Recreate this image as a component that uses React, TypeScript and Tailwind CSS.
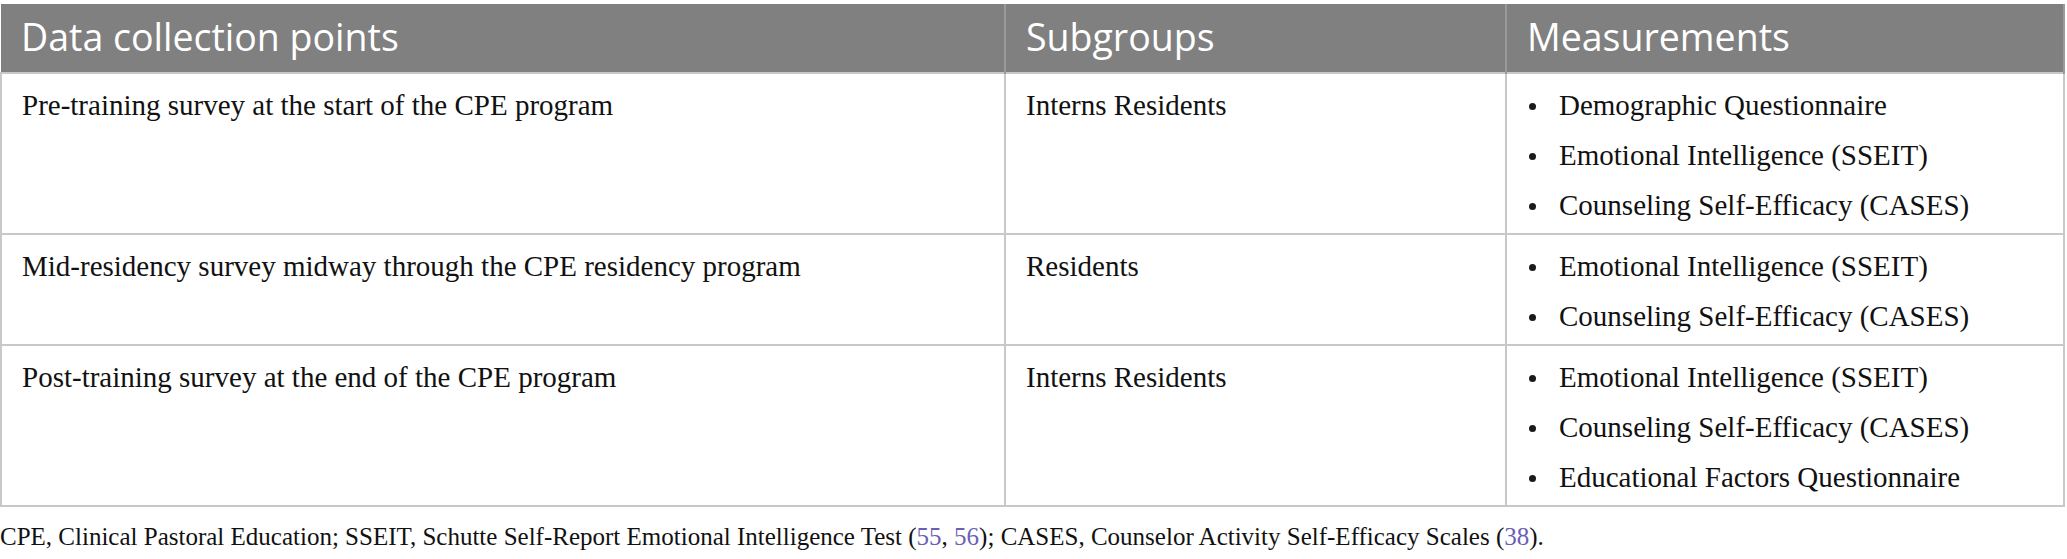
const rows = [
  {
    point: "Pre-training survey at the start of the CPE program",
    group: "Interns Residents",
    items: [
      "Demographic Questionnaire",
      "Emotional Intelligence (SSEIT)",
      "Counseling Self-Efficacy (CASES)",
    ],
  },
  {
    point: "Mid-residency survey midway through the CPE residency program",
    group: "Residents",
    items: ["Emotional Intelligence (SSEIT)", "Counseling Self-Efficacy (CASES)"],
  },
  {
    point: "Post-training survey at the end of the CPE program",
    group: "Interns Residents",
    items: [
      "Emotional Intelligence (SSEIT)",
      "Counseling Self-Efficacy (CASES)",
      "Educational Factors Questionnaire",
    ],
  },
];

export default function App() {
  return (
    <div className="bg-white w-[2067px] h-[559px] pt-[4px] font-['Liberation_Serif',serif] text-[#111]">
      <table className="w-[2065px] border-collapse table-fixed">
        <colgroup>
          <col className="w-[1004px]" />
          <col className="w-[501px]" />
          <col />
        </colgroup>
        <thead>
          <tr className="bg-[#808080] text-white font-['Open_Sans',sans-serif] text-[37.5px]">
            {["Data collection points", "Subgroups", "Measurements"].map((h) => (
              <th
                key={h}
                className="h-[69px] text-left font-normal px-[20px] pb-[2px] border-x-2 border-[#9a9a9a] first:border-l-0"
              >
                {h}
              </th>
            ))}
          </tr>
        </thead>
        <tbody className="text-[29px] leading-[50px]">
          {rows.map((r) => (
            <tr key={r.point} className="border-2 border-[#c8c8c8] align-top">
              <td className="border-2 border-[#c8c8c8] px-[20px] pt-[6px] pb-[3px]">{r.point}</td>
              <td className="border-2 border-[#c8c8c8] px-[20px] pt-[6px] pb-[3px]">{r.group}</td>
              <td className="border-2 border-[#c8c8c8] pl-[22px] pr-[20px] pt-[6px] pb-[3px]">
                <ul>
                  {r.items.map((it) => (
                    <li key={it} className="flex items-center">
                      <span className="w-[7px] h-[7px] rounded-full bg-[#1a1a1a] mr-[23px] mt-[2px]" />
                      <span>{it}</span>
                    </li>
                  ))}
                </ul>
              </td>
            </tr>
          ))}
        </tbody>
      </table>
      <p className="text-[25px] mt-[11px]">
        CPE, Clinical Pastoral Education; SSEIT, Schutte Self-Report Emotional Intelligence Test (
        <span className="text-[#6b5fb5]">55</span>, <span className="text-[#6b5fb5]">56</span>); CASES,
        Counselor Activity Self-Efficacy Scales (<span className="text-[#6b5fb5]">38</span>).
      </p>
    </div>
  );
}
